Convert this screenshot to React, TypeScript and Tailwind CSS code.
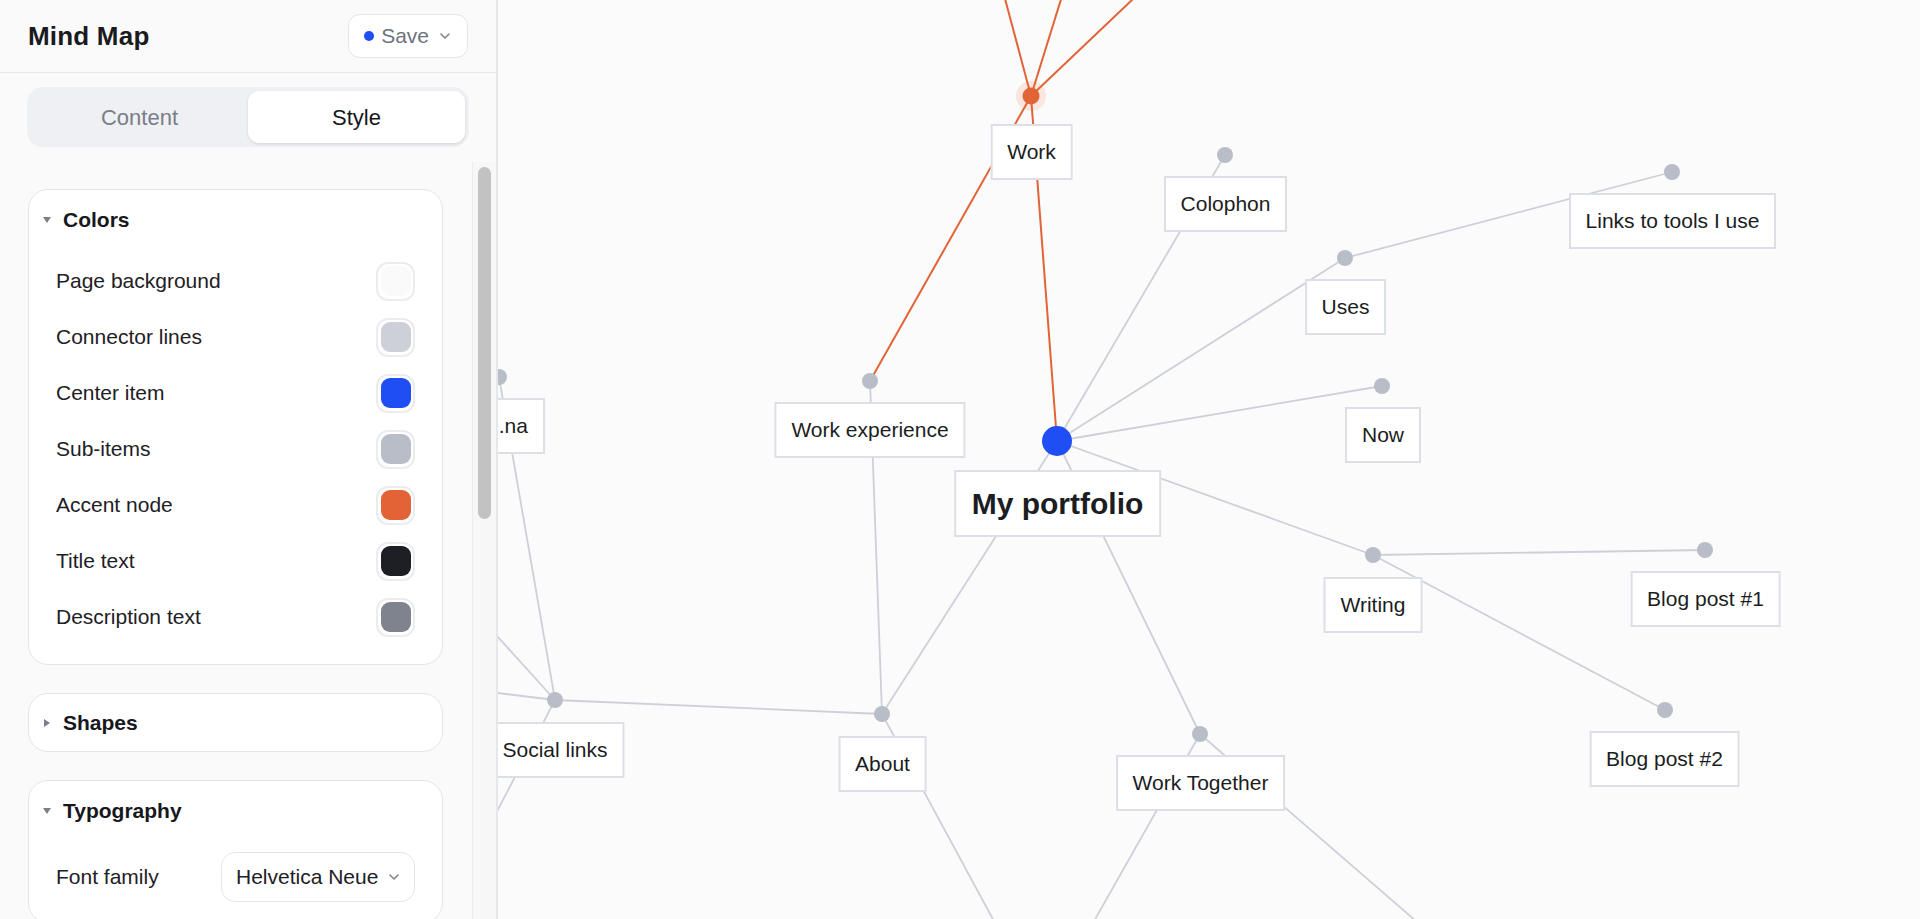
import React from 'react';

type Pt = [number, number];

// canvas coordinates are page coordinates; the world layer is shifted by the sidebar width
const SIDEBAR_W = 498;

const CENTER: Pt = [1057, 441];
const ACCENT: Pt = [1031, 96];

const dots: Record<string, Pt> = {
  workExp: [870, 381],
  about: [882, 714],
  social: [555, 700],
  arena: [499, 377],
  colophon: [1225, 155],
  uses: [1345, 258],
  links: [1672, 172],
  now: [1382, 386],
  writing: [1373, 555],
  blog1: [1705, 550],
  blog2: [1665, 710],
  together: [1200, 734],
};

const accentEdges: [Pt, Pt][] = [
  [ACCENT, [1000, -20]],
  [ACCENT, [1067, -20]],
  [ACCENT, [1153, -20]],
  [ACCENT, CENTER],
  [ACCENT, dots.workExp],
];

const edges: [Pt, Pt][] = [
  [dots.workExp, dots.about],
  [CENTER, dots.about],
  [CENTER, dots.colophon],
  [CENTER, dots.uses],
  [CENTER, dots.now],
  [CENTER, dots.writing],
  [CENTER, dots.together],
  [dots.uses, dots.links],
  [dots.writing, dots.blog1],
  [dots.writing, dots.blog2],
  [dots.about, dots.social],
  [dots.about, [1015, 960]],
  [dots.together, [1072, 960]],
  [dots.together, [1461, 960]],
  [dots.social, dots.arena],
  [dots.social, [400, 681]],
  [dots.social, [400, 529]],
  [dots.social, [430, 940]],
];

const nodes = [
  { label: 'Work', x: 1031.5, y: 124 },
  { label: 'Work experience', x: 870, y: 402 },
  { label: 'Are.na', x: 497, y: 398 },
  { label: 'Social links', x: 555, y: 722 },
  { label: 'About', x: 882.5, y: 736 },
  { label: 'Colophon', x: 1225.5, y: 176 },
  { label: 'Uses', x: 1345.5, y: 279 },
  { label: 'Links to tools I use', x: 1672.5, y: 193 },
  { label: 'Now', x: 1383, y: 407 },
  { label: 'Writing', x: 1373, y: 577 },
  { label: 'Blog post #1', x: 1705.5, y: 571 },
  { label: 'Blog post #2', x: 1664.5, y: 731 },
  { label: 'Work Together', x: 1200.5, y: 755 },
];

const colorRows = [
  { label: 'Page background', color: '#fafafa' },
  { label: 'Connector lines', color: '#cdd0d8' },
  { label: 'Center item', color: '#1f4ef5' },
  { label: 'Sub-items', color: '#b9bdc7' },
  { label: 'Accent node', color: '#e26436' },
  { label: 'Title text', color: '#1d1f24' },
  { label: 'Description text', color: '#7f838d' },
];

const Chevron = () => (
  <svg width="10" height="6" viewBox="0 0 10 6" fill="none">
    <path d="M1 1l4 4 4-4" stroke="#7b7f89" strokeWidth="1.5" strokeLinecap="round" strokeLinejoin="round" />
  </svg>
);

const Caret = ({ open }: { open: boolean }) => (
  <span className="w-[9px] flex items-center justify-center">
    {open ? (
      <svg width="8" height="6" viewBox="0 0 8 6">
        <path d="M0 0h8L4 6z" fill="#7b7f89" />
      </svg>
    ) : (
      <svg width="6" height="8" viewBox="0 0 6 8">
        <path d="M0 0v8l6-4z" fill="#7b7f89" />
      </svg>
    )}
  </span>
);

const SectionHeader = ({ title, open }: { title: string; open: boolean }) => (
  <div className="flex items-center gap-[12px] px-[13px] h-[60px]">
    <Caret open={open} />
    <span className="text-[21px] font-semibold text-[#17181c]">{title}</span>
  </div>
);

const Sidebar = () => (
  <aside className="w-[498px] shrink-0 h-full flex flex-col bg-[#fafafa] border-r-2 border-[#e6e7eb]">
    <header className="h-[73px] shrink-0 flex items-center justify-between px-[28px] border-b border-[#e6e7eb]">
      <h1 className="text-[26px] font-bold text-[#1a1b1f] tracking-[0.2px]">Mind Map</h1>
      <button className="h-[44px] flex items-center pl-[15px] pr-[17px] rounded-[12px] border border-[#e3e5ea] bg-white">
        <span className="w-[10px] h-[10px] rounded-full bg-[#1f4ef5]" />
        <span className="ml-[7px] text-[21px] text-[#6e727c]">Save</span>
        <span className="ml-[11px] flex"><Chevron /></span>
      </button>
    </header>

    <div className="pt-[14px] px-[27px]">
      <div className="h-[60px] p-[4px] rounded-[16px] bg-[#eff0f3] grid grid-cols-2">
        <button className="rounded-[11px] text-[22px] font-medium text-[#7a7e88]">Content</button>
        <button className="rounded-[11px] bg-white text-[22px] font-medium text-[#16171b] shadow-[0_1px_3px_rgba(0,0,0,0.12)]">
          Style
        </button>
      </div>
    </div>

    <div className="mt-[15px] flex-1 min-h-0 flex">
      <div className="flex-1 min-w-0 overflow-hidden pt-[27px] pl-[28px] pr-[29px] flex flex-col gap-[28px]">
        <section className="shrink-0 rounded-[20px] border border-[#e3e5ea] bg-white pb-[19px]">
          <SectionHeader title="Colors" open />
          <div className="pt-[3px] px-[27px]">
            {colorRows.map((row) => (
              <div key={row.label} className="h-[56px] flex items-center justify-between">
                <span className="text-[21px] text-[#1e2025]">{row.label}</span>
                <span className="w-[39px] h-[39px] rounded-[12px] border-2 border-[#ebecef] bg-white flex items-center justify-center">
                  <span className="w-[30px] h-[30px] rounded-[9px]" style={{ backgroundColor: row.color }} />
                </span>
              </div>
            ))}
          </div>
        </section>

        <section className="shrink-0 rounded-[20px] border border-[#e3e5ea] bg-white">
          <div className="flex items-center gap-[12px] px-[13px] h-[57px]">
            <Caret open={false} />
            <span className="text-[21px] font-semibold text-[#17181c]">Shapes</span>
          </div>
        </section>

        <section className="shrink-0 rounded-[20px] border border-[#e3e5ea] bg-white pb-[20px]">
          <SectionHeader title="Typography" open />
          <div className="pt-[11px] px-[27px]">
            <div className="h-[50px] flex items-center justify-between">
              <span className="text-[21px] text-[#1e2025]">Font family</span>
              <button className="w-[194px] h-[50px] rounded-[14px] border border-[#e3e5ea] bg-white flex items-center justify-between pl-[14px] pr-[15px]">
                <span className="text-[21px] text-[#1e2025]">Helvetica Neue</span>
                <Chevron />
              </button>
            </div>
          </div>
        </section>
      </div>

      {/* scrollbar */}
      <div className="w-[24px] shrink-0 border-l border-[#ececef] bg-[#f7f7f8] pt-[5px] pl-[5px]">
        <div className="w-[13px] h-[352px] rounded-full bg-[#c2c2c2]" />
      </div>
    </div>
  </aside>
);

const MapCanvas = () => (
  <main className="flex-1 relative overflow-hidden bg-[#fbfbfc]">
    <div className="absolute top-0 w-[1920px] h-[919px]" style={{ left: -SIDEBAR_W }}>
      <svg className="absolute inset-0" width="1920" height="919">
        <circle cx={ACCENT[0]} cy={ACCENT[1]} r="15" fill="#f9e6de" />
        {edges.map(([a, b], i) => (
          <line key={i} x1={a[0]} y1={a[1]} x2={b[0]} y2={b[1]} stroke="#cdd0d8" strokeWidth="1.8" />
        ))}
        {accentEdges.map(([a, b], i) => (
          <line key={i} x1={a[0]} y1={a[1]} x2={b[0]} y2={b[1]} stroke="#e26436" strokeWidth="2" />
        ))}
        {Object.entries(dots).map(([k, [x, y]]) => (
          <circle key={k} cx={x} cy={y} r="8" fill="#b9bdc7" />
        ))}
        <circle cx={ACCENT[0]} cy={ACCENT[1]} r="8.5" fill="#e26436" />
        <circle cx={CENTER[0]} cy={CENTER[1]} r="15" fill="#1f4ef5" />
      </svg>

      {nodes.map((n) => (
        <div
          key={n.label}
          className="absolute -translate-x-1/2 h-[56px] px-[15px] flex items-center bg-white border-2 border-[#dcdfe6] whitespace-nowrap text-[21px] text-[#1b1d22]"
          style={{ left: n.x, top: n.y }}
        >
          {n.label}
        </div>
      ))}

      <div
        className="absolute -translate-x-1/2 h-[67px] px-[16px] flex items-center bg-white border-2 border-[#dcdfe6] whitespace-nowrap text-[30px] font-bold text-[#1b1d22]"
        style={{ left: 1057.5, top: 470 }}
      >
        My portfolio
      </div>
    </div>
  </main>
);

export default function App() {
  return (
    <div className="w-full h-[919px] flex overflow-hidden font-['Liberation_Sans',Arial,sans-serif]">
      <Sidebar />
      <MapCanvas />
    </div>
  );
}
